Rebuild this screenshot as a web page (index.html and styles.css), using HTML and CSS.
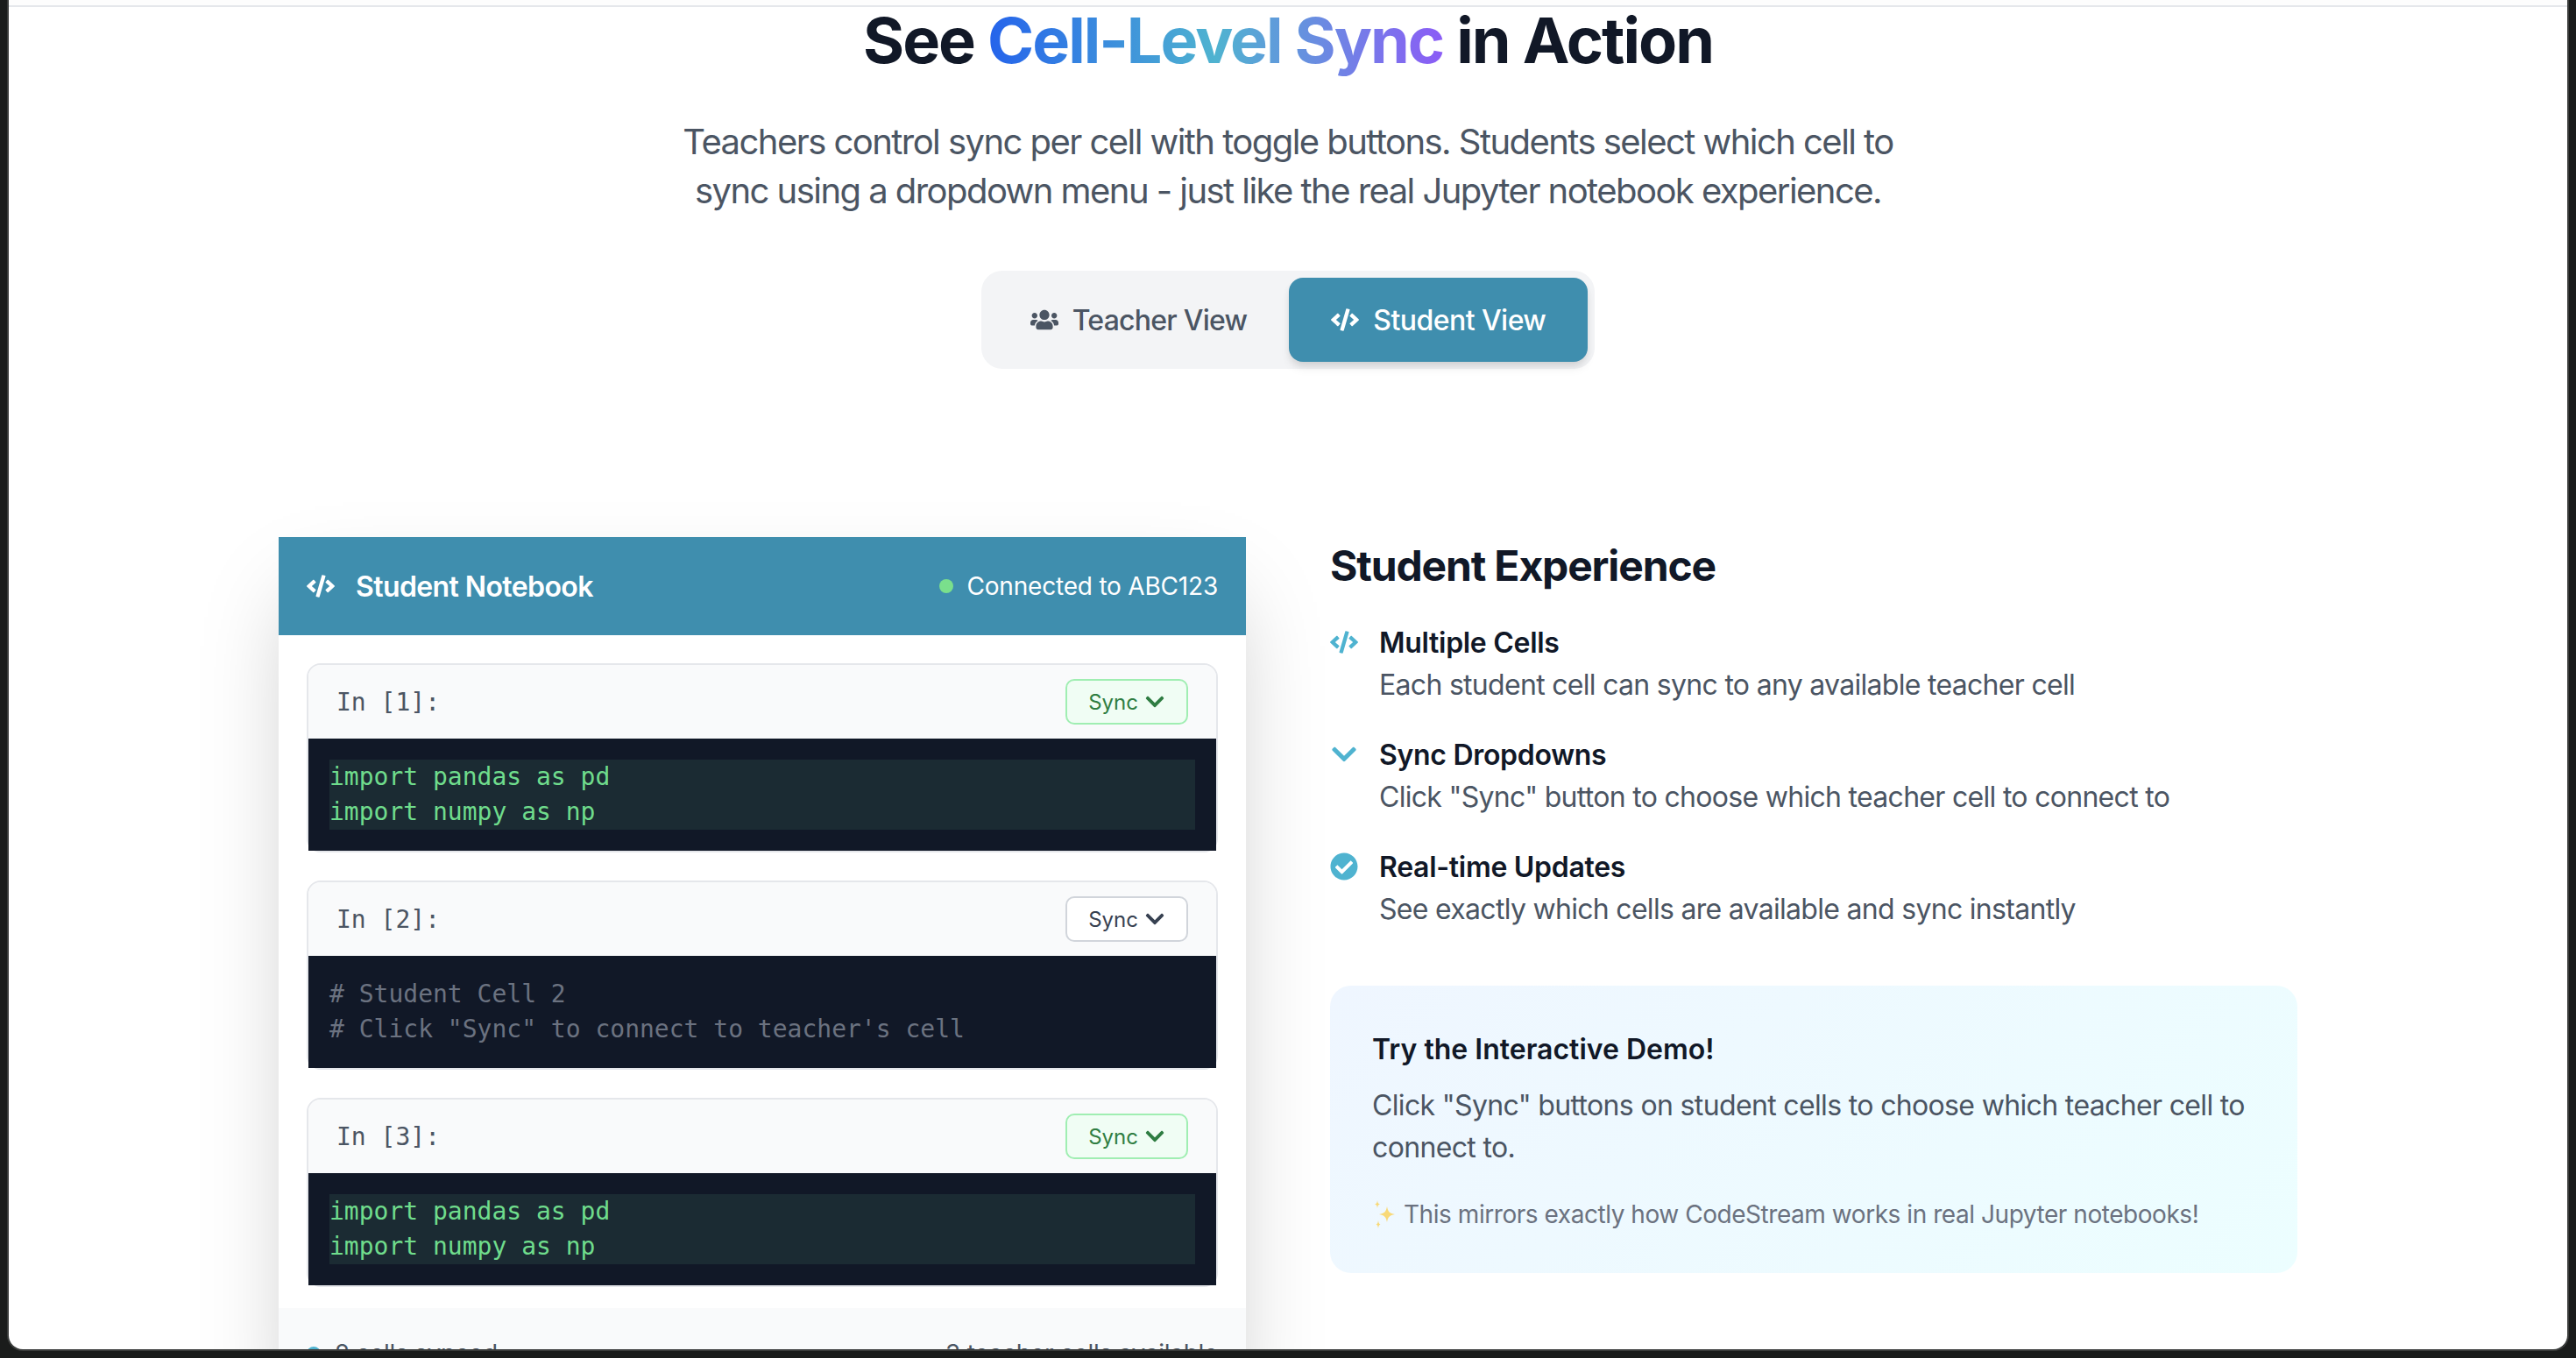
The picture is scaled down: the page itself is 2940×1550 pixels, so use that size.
FILE: index.html
```html
<!DOCTYPE html>
<html lang="en">
<head>
    <meta charset="UTF-8">
    <meta name="viewport" content="width=device-width, initial-scale=1.0">
    <title>See Cell-Level Sync in Action</title>
    <link rel="stylesheet" href="styles.css">
</head>
<body>

    <!-- Shared icons -->
    <svg class="icon-defs" aria-hidden="true">
        <symbol id="i-code" viewBox="0 0 640 512"><path d="M278.9 511.5l-61-17.7c-6.4-1.8-10-8.5-8.2-14.9L346.2 8.7c1.8-6.4 8.5-10 14.9-8.2l61 17.7c6.4 1.8 10 8.5 8.2 14.9L293.8 503.3c-1.9 6.4-8.5 10.1-14.9 8.2zm-114-112.2l43.5-46.4c4.6-4.9 4.3-12.7-.8-17.2L117 256l90.6-79.7c5.1-4.5 5.5-12.3.8-17.2l-43.5-46.4c-4.5-4.8-12.1-5.1-17-.5L3.8 247.2c-5.1 4.7-5.1 12.8 0 17.5l144.1 135.1c4.9 4.6 12.5 4.4 17-.5zm327.2.6l144.1-135.1c5.1-4.7 5.1-12.8 0-17.5L492.1 112.1c-4.8-4.5-12.4-4.3-17 .5L431.6 159c-4.6 4.9-4.3 12.7.8 17.2L523 256l-90.6 79.7c-5.1 4.5-5.5 12.3-.8 17.2l43.5 46.4c4.5 4.9 12.1 5.1 17 .6z"/></symbol>
        <symbol id="i-users" viewBox="0 0 640 512"><path d="M96 224c35.3 0 64-28.7 64-64s-28.7-64-64-64-64 28.7-64 64 28.7 64 64 64zm448 0c35.3 0 64-28.7 64-64s-28.7-64-64-64-64 28.7-64 64 28.7 64 64 64zm32 32h-64c-17.6 0-33.5 7.1-45.1 18.6 40.3 22.1 68.9 62 75.1 109.4h66c17.7 0 32-14.3 32-32v-32c0-35.3-28.7-64-64-64zm-256 0c61.9 0 112-50.1 112-112S381.9 32 320 32 208 82.1 208 144s50.1 112 112 112zm76.8 32h-8.3c-20.8 10-43.9 16-68.5 16s-47.6-6-68.5-16h-8.3C179.6 288 128 339.6 128 403.2V432c0 26.5 21.5 48 48 48h288c26.5 0 48-21.5 48-48v-28.8c0-63.6-51.6-115.2-115.2-115.2zm-223.7-13.4C161.5 263.1 145.6 256 128 256H64c-35.3 0-64 28.7-64 64v32c0 17.7 14.3 32 32 32h65.9c6.3-47.4 34.9-87.3 75.2-109.4z"/></symbol>
        <symbol id="i-chevron" viewBox="0 0 448 512"><path d="M207.029 381.476L12.686 187.132c-9.373-9.373-9.373-24.569 0-33.941l22.667-22.667c9.357-9.357 24.522-9.375 33.901-.04L224 284.505l154.745-154.021c9.379-9.335 24.544-9.317 33.901.04l22.667 22.667c9.373 9.373 9.373 24.569 0 33.941L240.971 381.476c-9.373 9.372-24.569 9.372-33.942 0z"/></symbol>
        <symbol id="i-check" viewBox="0 0 512 512"><path d="M504 256c0 136.967-111.033 248-248 248S8 392.967 8 256 119.033 8 256 8s248 111.033 248 248zM227.314 387.314l184-184c6.248-6.248 6.248-16.379 0-22.627l-22.627-22.627c-6.248-6.249-16.379-6.249-22.628 0L216 308.118l-70.059-70.059c-6.248-6.248-16.379-6.248-22.628 0l-22.627 22.627c-6.248 6.248-6.248 16.379 0 22.627l104 104c6.249 6.249 16.379 6.249 22.628.001z"/></symbol>
    </svg>

    <div class="window">
        <div class="top-strip"></div>

        <section class="demo">
            <h2 class="demo-title">See <span class="gradient-text">Cell-Level Sync</span> in Action</h2>
            <p class="demo-sub">Teachers control sync per cell with toggle buttons. Students select which cell to sync using a dropdown menu - just like the real Jupyter notebook experience.</p>

            <!-- Teacher / student switch -->
            <div class="toggle">
                <button class="toggle-btn"><svg class="icon"><use href="#i-users"/></svg>Teacher View</button>
                <button class="toggle-btn active"><svg class="icon"><use href="#i-code"/></svg>Student View</button>
            </div>

            <div class="demo-grid">

                <!-- Notebook -->
                <div class="notebook">
                    <div class="nb-header">
                        <div class="nb-title"><svg class="icon"><use href="#i-code"/></svg>Student Notebook</div>
                        <div class="nb-status"><span class="status-dot"></span>Connected to ABC123</div>
                    </div>

                    <div class="nb-body">
                        <div class="cell">
                            <div class="cell-head">
                                <span class="prompt">In [1]:</span>
                                <button class="sync-btn synced">Sync <svg class="chev"><use href="#i-chevron"/></svg></button>
                            </div>
                            <div class="cell-code">
                                <pre class="code-lines synced-code">import pandas as pd
import numpy as np</pre>
                            </div>
                        </div>

                        <div class="cell">
                            <div class="cell-head">
                                <span class="prompt">In [2]:</span>
                                <button class="sync-btn">Sync <svg class="chev"><use href="#i-chevron"/></svg></button>
                            </div>
                            <div class="cell-code">
                                <pre class="code-lines">
# Student Cell 2
# Click "Sync" to connect to teacher's cell</pre>
                            </div>
                        </div>

                        <div class="cell">
                            <div class="cell-head">
                                <span class="prompt">In [3]:</span>
                                <button class="sync-btn synced">Sync <svg class="chev"><use href="#i-chevron"/></svg></button>
                            </div>
                            <div class="cell-code">
                                <pre class="code-lines synced-code">import pandas as pd
import numpy as np</pre>
                            </div>
                        </div>
                    </div>

                    <div class="nb-footer">
                        <div class="foot-left"><span class="foot-dot"></span>2 cells synced</div>
                        <div>3 teacher cells available</div>
                    </div>
                </div>

                <!-- Explanation -->
                <div class="explain">
                    <h3 class="explain-title">Student Experience</h3>

                    <div class="feature">
                        <svg class="icon feature-icon"><use href="#i-code"/></svg>
                        <div>
                            <h4>Multiple Cells</h4>
                            <p>Each student cell can sync to any available teacher cell</p>
                        </div>
                    </div>
                    <div class="feature">
                        <svg class="icon feature-icon"><use href="#i-chevron"/></svg>
                        <div>
                            <h4>Sync Dropdowns</h4>
                            <p>Click "Sync" button to choose which teacher cell to connect to</p>
                        </div>
                    </div>
                    <div class="feature">
                        <svg class="icon feature-icon"><use href="#i-check"/></svg>
                        <div>
                            <h4>Real-time Updates</h4>
                            <p>See exactly which cells are available and sync instantly</p>
                        </div>
                    </div>

                    <div class="try-box">
                        <h4>Try the Interactive Demo!</h4>
                        <p>Click "Sync" buttons on student cells to choose which teacher cell to connect to.</p>
                        <p class="try-note"><svg class="sparkle" viewBox="0 0 28 32"><path d="M17 7c1 6 3 8 9 9-6 1-8 3-9 9-1-6-3-8-9-9 6-1 8-3 9-9z"/><path d="M6 0c.4 3 1 4 3 4.500-2 .5-2.600 1.500-3 4.500-.4-3-1-4-3-4.500 2-.5 2.600-1.500 3-4.500z"/><path d="M7 23c.4 3 1 4 2.500 4.500-1.500.5-2.100 1.500-2.500 4.500-.4-3-1-4-2.500-4.500 1.500-.5 2.100-1.500 2.500-4.500z"/></svg>This mirrors exactly how CodeStream works in real Jupyter notebooks!</p>
                    </div>
                </div>

            </div>
        </section>
    </div>

</body>
</html>
```

FILE: styles.css
```css
* {
    box-sizing: border-box;
}

html, body {
    height: 100%;
}

body {
    margin: 0;
    padding: 0 8px 8px;
    overflow: hidden;
    background-color: #1a1c1b;
    font-family: 'Inter', 'Liberation Sans', sans-serif;
    color: #111827;
}

.icon-defs {
    display: none;
}

h2, h3, h4, p, pre {
    margin: 0;
}

button {
    font-family: inherit;
    border: none;
    cursor: pointer;
}

/* Frame of the browser window */
.window {
    height: 100%;
    overflow: hidden;
    background-color: #fff;
    border: 2px solid #3a3c3b;
    border-top: none;
    border-radius: 0 0 18px 18px;
}

.top-strip {
    height: 8px;
    background-color: #fdfdfd;
    border-bottom: 2px solid #e5e7eb;
}

.icon {
    width: 32px;
    height: 32px;
    fill: currentColor;
    flex-shrink: 0;
}

/* Title block */
.demo {
    display: flex;
    flex-direction: column;
    align-items: center;
}

.demo-title {
    font-size: 72px;
    line-height: 80px;
    font-weight: 700;
    letter-spacing: -2px;
    text-align: center;
    margin-top: -2px;
}

.gradient-text {
    background: linear-gradient(90deg, #2563eb, #4fb3d0, #8b5cf6);
    -webkit-background-clip: text;
    background-clip: text;
    color: transparent;
}

.demo-sub {
    max-width: 1440px;
    margin-top: 48px;
    font-size: 40px;
    line-height: 56px;
    letter-spacing: -1.55px;
    color: #4b5563;
    text-align: center;
}

/* Switch */
.toggle {
    display: flex;
    margin-top: 63px;
    padding: 8px;
    background-color: #f3f4f6;
    border-radius: 24px;
}

.toggle-btn {
    display: flex;
    align-items: center;
    gap: 16px;
    height: 96px;
    padding: 0 48px;
    background: none;
    border-radius: 16px;
    font-size: 32px;
    font-weight: 500;
    letter-spacing: -0.75px;
    color: #4b5563;
}

.toggle-btn.active {
    background-color: #3f8eae;
    color: #fff;
    letter-spacing: -0.55px;
    box-shadow: 0 8px 12px -2px rgba(0, 0, 0, 0.1), 0 4px 8px -2px rgba(0, 0, 0, 0.08);
}

/* Two columns */
.demo-grid {
    display: grid;
    grid-template-columns: 1104px 1104px;
    gap: 96px;
    margin-top: 192px;
    width: 2304px;
    text-align: left;
}

/* Notebook */
.notebook {
    background-color: #fff;
    box-shadow: 0 50px 100px -24px rgba(0, 0, 0, 0.25);
}

.nb-header {
    display: flex;
    align-items: center;
    justify-content: space-between;
    height: 112px;
    padding: 0 32px;
    background-color: #3f8eae;
    color: #fff;
}

.nb-title {
    display: flex;
    align-items: center;
    gap: 24px;
    font-size: 32px;
    font-weight: 600;
    letter-spacing: -0.6px;
}

.nb-status {
    display: flex;
    align-items: center;
    gap: 16px;
    font-size: 28px;
    letter-spacing: -0.2px;
}

.status-dot {
    width: 16px;
    height: 16px;
    border-radius: 50%;
    background-color: #7adf8c;
}

.nb-body {
    display: flex;
    flex-direction: column;
    gap: 32px;
    padding: 32px 32px 24px;
}

.cell {
    border: 2px solid #e5e7eb;
    border-radius: 16px;
}

.cell-head {
    display: flex;
    align-items: center;
    justify-content: space-between;
    height: 84px;
    padding: 0 32px;
    background-color: #f9fafb;
    border-radius: 14px 14px 0 0;
}

.prompt {
    font-family: 'DejaVu Sans Mono', 'Liberation Mono', monospace;
    font-size: 28px;
    color: #4b5563;
}

.sync-btn {
    display: flex;
    align-items: center;
    gap: 7px;
    height: 52px;
    padding: 0 24px;
    background-color: #fff;
    border: 2px solid #d1d5db;
    border-radius: 10px;
    font-size: 24px;
    color: #374151;
}

.sync-btn.synced {
    background-color: #f0fdf4;
    border-color: #a0eeb2;
    color: #2f7d42;
}

.chev {
    width: 24px;
    height: 24px;
    fill: currentColor;
}

.cell-code {
    height: 128px;
    padding: 24px;
    background-color: #111827;
}

.code-lines {
    font-family: 'DejaVu Sans Mono', 'Liberation Mono', monospace;
    font-size: 28px;
    line-height: 40px;
    color: #6b7280;
    height: 80px;
}

.synced-code {
    background-color: #1b2b33;
    color: #6fdc8c;
}

.nb-footer {
    display: flex;
    align-items: center;
    justify-content: space-between;
    padding: 32px;
    background-color: #f9fafb;
    font-size: 28px;
    line-height: 40px;
    letter-spacing: -0.3px;
    color: #4b5563;
}

.foot-left {
    display: flex;
    align-items: center;
    gap: 16px;
}

.foot-dot {
    width: 16px;
    height: 16px;
    border-radius: 50%;
    background-color: #4fb3d0;
}

/* Explanation column */
.explain-title {
    font-size: 48px;
    line-height: 66px;
    font-weight: 700;
    letter-spacing: -1.15px;
    margin-bottom: 31px;
}

.feature {
    display: flex;
    gap: 24px;
    margin-bottom: 32px;
}

.feature-icon {
    margin-top: 7px;
    color: #4fb3d0;
}

.feature h4 {
    font-size: 32px;
    line-height: 48px;
    font-weight: 600;
    letter-spacing: -0.3px;
}

.feature p {
    font-size: 32px;
    line-height: 48px;
    letter-spacing: -0.7px;
    color: #4b5563;
}

.try-box {
    margin-top: 63px;
    padding: 49px 48px 47px;
    background: linear-gradient(135deg, #eff6ff, #ecfeff);
    border-radius: 24px;
}

.try-box h4 {
    font-size: 32px;
    line-height: 48px;
    font-weight: 600;
    margin-bottom: 16px;
}

.try-box p {
    font-size: 32px;
    line-height: 48px;
    letter-spacing: -0.65px;
    color: #4b5563;
}

.try-box .try-note {
    display: flex;
    align-items: center;
    gap: 8px;
    margin-top: 32px;
    font-size: 28px;
    line-height: 40px;
    letter-spacing: -0.45px;
    color: #6b7280;
}

.sparkle {
    width: 28px;
    height: 32px;
    fill: #f8d978;
}
```
